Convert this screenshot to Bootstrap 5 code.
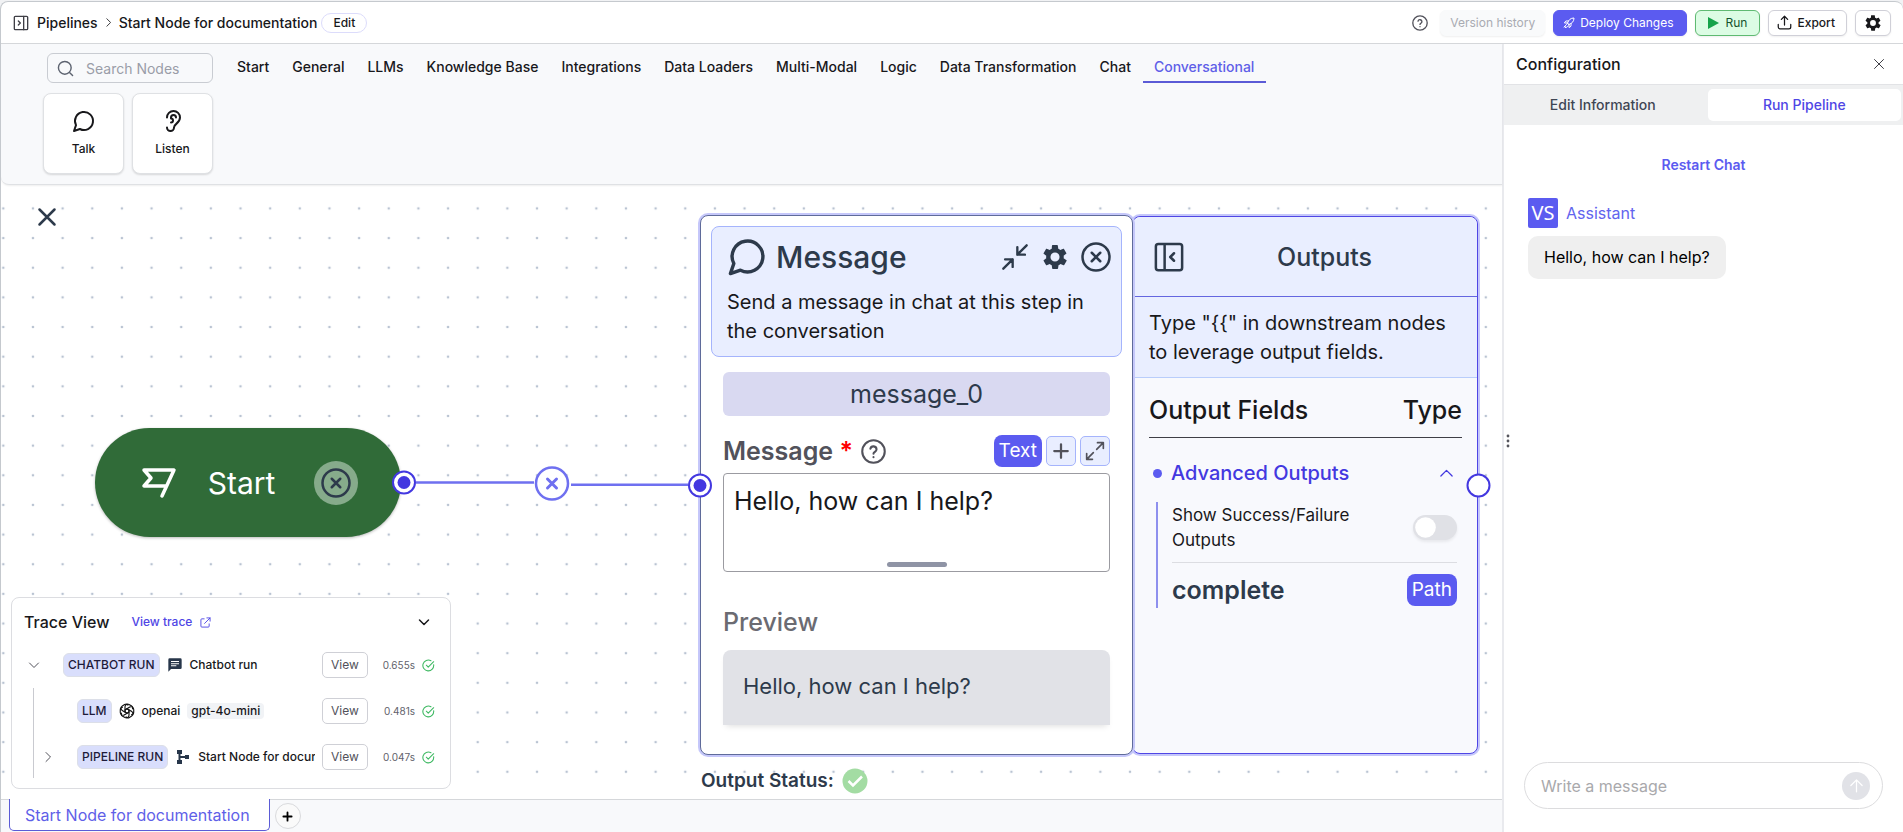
<!DOCTYPE html>
<html lang="en">
<head>
<meta charset="utf-8">
<meta name="viewport" content="width=device-width, initial-scale=1">
<title>Start Node for documentation</title>
<link href="https://cdn.jsdelivr.net/npm/bootstrap@5.3.0/dist/css/bootstrap.min.css" rel="stylesheet">
<style>
:root{--vs:#5b5bf0;--vs-deep:#4338e0;--ink:#18181b;--slate:#2d3a4b}
body{font-family:Inter,"Liberation Sans",sans-serif;font-size:14px;line-height:20px;color:var(--ink);background:#f1f2f4;min-height:100vh;padding-top:1px}
svg{display:block;flex:none}
a{text-decoration:none}
.bare{border:0;background:none;padding:0;color:inherit}
.ic{fill:none;stroke:currentColor;stroke-width:2;stroke-linecap:round;stroke-linejoin:round}
.ic-bold{stroke-width:3}
.ic-heavy{stroke-width:4}
.tone-gray{color:#52525b}
.tone-dark{color:#3f3f46}
.tone-vs{color:var(--vs)}
.tone-ok{color:#3fb963}
.app-shell{min-height:calc(100vh - 1px);background:#fff;border-top:1px solid #c5c9ce;border-left:1px solid #c5c9ce;border-radius:8px 8px 0 0;overflow:hidden}
.btn{--bs-btn-font-size:12px;--bs-btn-line-height:16px;--bs-btn-border-radius:6px}
main{min-width:0}
/* header */
.topbar{height:42px;border-bottom:1px solid #d5d7da;padding:0 12px}
.crumb-link{color:var(--ink);font-weight:500}
.btn-bar{height:26px;padding:0 11px;display:inline-flex;align-items:center;gap:5px;background:#fff;border:1px solid #d0d0d8;color:var(--ink);box-shadow:0 1px 2px #0001}
.btn-pill{height:20px;padding:0 11px;border:1px solid #dcdcfb;border-radius:10px;background:#fff;color:var(--ink);font-weight:500;line-height:16px}
.btn-ghosted{background:#f9fafb;border-color:#f9fafb;color:#a9abb2;padding:0 9px}
.btn-deploy{background:var(--vs);border-color:var(--vs);color:#fff;padding:0 12px 0 9px}
.btn-run{background:#dcfce4;border-color:#5fba72;color:#14532d;padding:0 12px 0 10px;gap:6px}
/* palette */
.palette{height:141px;background:#f8f9fb;border-bottom:1px solid #dfe1e4;box-shadow:0 1px 2px #0001;padding:9px 42px 0;border-radius:0 0 0 8px;z-index:1}
.search-wrap{width:166px;height:30px;margin:0 13px 0 4px;border:1px solid #c9ccd2;border-radius:6px;color:#5d6370;padding:0 9px;gap:12px}
.search-wrap input{border:0;background:transparent;outline:0;width:100%;min-width:0;padding:0;height:24px}
input::placeholder{color:#9a9da8;opacity:1}
.node-tabs .nav-link{padding:4px 12px 4px 11px;color:var(--ink);font-weight:500;border-bottom:2px solid transparent}
.node-tabs .nav-link.active{color:#5f5fe8;border-color:#5b5bd6}
.tile-row{margin-top:10px}
.node-tile{width:81px;height:81px;background:#fff;border:1px solid #dfe1e4;border-radius:8px;box-shadow:0 1px 2px #0002;font-size:12px;line-height:18px;font-weight:500;gap:7px;padding:0;color:var(--ink)}
/* canvas */
.flow-canvas{background:#fff;min-height:614px;overflow:hidden}
.on-canvas{position:absolute}
.flow-close{left:36px;top:22px;color:var(--slate)}
.start-node{left:94px;top:243px;width:306px;height:109px;background:#306b38;border-radius:55px;color:#fff;box-shadow:0 1px 3px #0004;font-size:30px;line-height:36px;padding:0 43px 0 46px}
.start-node span{padding-right:8px}
.start-del{background:#86ab8b;color:var(--slate);padding:7px;border-radius:50%}
.msg-node{left:699px;top:30px;width:433px;height:540px;background:#fff;border:1px solid #5f6b9a;border-radius:8px;box-shadow:0 0 0 2px #c5c7fa;padding:10px;z-index:1;color:var(--slate)}
.msg-head{height:131px;background:#e9eeff;border:1px solid #a5b4fc;border-radius:8px;padding:9px 10px 0 15px}
.msg-form{padding:15px 12px 0}
.msg-label-row{height:32px;margin:19px 0 6px}
.node-title{font-size:30px;line-height:36px;font-weight:500}
.text-20{font-size:20px;line-height:29px;color:var(--ink)}
.msg-head .text-20{margin-top:11px}
.text-25{font-size:25px;line-height:32px}
.text-17{font-size:17px;line-height:25px}
.name-input{height:44px;background:#d9d9f1;border:0;border-radius:6px;width:100%;text-align:center;color:var(--slate)}
.field-label{color:#52525b;font-weight:600}
.req{color:#f00}
.pill-type{height:32px;background:var(--vs);border:0;border-radius:8px;color:#fff;font-size:19px;line-height:24px;padding:0 5px}
.mini-btn{width:30px;height:30px;background:#e9eeff;border:1px solid #a5b4fc;border-radius:5px;padding:0;color:#52525b}
.msg-input{display:block;width:100%;height:99px;border:1px solid #9b9ba1;border-radius:4px;padding:11px 10px;color:var(--ink);resize:none;outline:0}
.grip{position:absolute;left:50%;bottom:5px;width:60px;height:5px;margin-left:-30px;border-radius:3px;background:#8f94a5}
.preview-label{color:#6b6b72;font-weight:500;margin:34px 0 12px}
.preview-box{height:75px;background:#e1e2e7;border-radius:8px 8px 0 0;padding:20px;font-size:22px;line-height:32px;box-shadow:0 4px 6px -3px #0002}
.out-node{left:1131px;top:31px;width:346px;height:538px;background:#f8f9fd;border:1px solid #4f46e5;border-radius:8px;box-shadow:0 0 0 2px #c5c7fa;color:var(--ink)}
.out-head{height:80px;background:#e9eeff;border-bottom:1px solid #6466e0;border-radius:8px 8px 0 0;padding:0 12px 0 21px;color:var(--slate)}
.out-desc{height:81px;background:#e9eeff;border-bottom:1px solid #b9cdfb;padding:12px 16px}
.out-body{padding:16px 15px 0 16px}
.out-cols{height:44px;border-bottom:1px solid #3f3f46;font-weight:500}
.adv-toggle{margin-top:21px;padding-right:8px;font-weight:500;font-size:20px;line-height:29px;color:var(--vs-deep)}
.dot-mark{width:9px;height:9px;border-radius:50%;background:var(--vs);margin:0 9px 0 4px}
.adv{margin:14px 5px 0 7px;border-left:2px solid #8e90ee;padding-left:14px;height:106px}
.adv .form-switch{height:61px;padding:0 0 9px;border-bottom:1px solid #dcdde2}
.adv-item{height:54px;font-weight:600;color:var(--slate)}
.form-switch .form-check-input{width:44px;height:25px;margin:0;border:0;background-color:#e0e1e6;--bs-form-switch-bg:url("data:image/svg+xml,%3csvg xmlns='http://www.w3.org/2000/svg' viewBox='-4 -4 8 8'%3e%3ccircle r='3.3' fill='%23fff'/%3e%3c/svg%3e");box-shadow:0 2px 3px #0001}
.edges{left:390px;top:280px;z-index:2;pointer-events:none}
.status-line{left:700px;top:583px;font-size:19px;line-height:24px;font-weight:600;color:var(--slate)}
/* trace */
.trace-card{left:10px;bottom:10px;width:440px;height:192px;background:#fff;border:1px solid #dcdde1;border-radius:8px;font-size:12px;line-height:16px;font-weight:500}
.trace-head{height:44px;padding:4px 20px 0 12px;font-size:16px}
.trace-head a{font-size:12px;color:#4f46e5;margin-left:22px}
.trace-row{height:46px;padding-right:15px;gap:7px}
.row-root{padding-left:16px}
.row-llm{padding-left:43px}
.row-pipe{padding-left:8px}
.trace-caret{margin-right:16px}
.trace-kids{margin-left:21px;border-left:1px solid #c9cad0;height:90px}
.run-badge{background:#d9defc;border:1px solid #dcdfe8;border-radius:6px;padding:3px 4px;color:#1e1b3a;white-space:nowrap}
.chip{background:#f1f3f6;border-radius:4px;padding:0 4px}
.clip-name{flex:1 1 0;min-width:0;overflow:hidden;white-space:nowrap}
.btn-view{width:46px;height:26px;background:#fff;border:1px solid #cfd0d6;border-radius:5px;color:#52525b;padding:0;flex:none}
.took{width:40px;text-align:right;font-size:10px;font-weight:400;color:#62626b;flex:none}
/* bottom tabs */
.sheet-bar{height:33px;background:#f8f9fb;border-top:1px solid #d5d7da;padding-left:8px;gap:5px}
.sheet-tab{height:32px;margin-top:-1px;border:1px solid #5b5bd6;border-top:0;border-radius:0 0 5px 5px;background:#fff;color:#5f5fe8;font-size:16px;line-height:24px;padding:0 19px 0 15px}
.sheet-add{width:26px;height:26px;border:1px solid #d9dadd;border-radius:50%;background:#fafafa;padding:0}
/* side panel */
.side-panel{width:401px;flex:none;border-left:2px solid #e9eaee;background:#fff}
.side-head{height:41px;border-bottom:1px solid #e2e3e6;padding:0 18px 0 12px;font-size:16px;font-weight:500}
.side-tabs{height:40px;background:#eff0f1;padding:4px 2px;gap:8px}
.side-tabs button{flex:1;border:0;border-radius:5px;background:none;font-weight:500;color:#3f4654}
.side-tabs button.on{background:#fff;color:#4f46e5}
.splitter{position:absolute;left:2px;top:390px}
.chat-log{padding:30px 24px}
.who{margin-top:23px;font-size:16px;color:#6264ee}
.vs-mark{width:30px;height:30px;border-radius:2px;background:var(--vs);color:#fff;font:20px/30px "Noto Sans",sans-serif}
.bubble{background:#efefef;border-radius:10px;padding:9px 16px 10px;font-size:16px;line-height:24px;color:#000}
.compose{margin:0 20px 23px;height:47px;border:1px solid #dcdcde;border-radius:24px;padding:0 12px 0 16px}
.compose input{border:0;outline:0;font-size:16px;line-height:24px;background:none;min-width:0;padding:0}
.compose input::placeholder{color:#a9a9ac}
.send{width:28px;height:28px;border:0;border-radius:50%;background:#e1e2e7;color:#fff;padding:0}
</style>
</head>
<body>
<svg width="0" height="0" class="position-absolute" aria-hidden="true">
  <defs>
    <symbol id="i-x" viewBox="0 0 24 24"><path d="M3 3l18 18M21 3L3 21"/></symbol>
    <symbol id="i-xc" viewBox="0 0 24 24"><circle cx="12" cy="12" r="10.8"/><path d="M8.6 8.6l6.8 6.8M15.4 8.6l-6.8 6.8"/></symbol>
    <symbol id="i-chat" viewBox="0 0 24 24"><path d="M7.9 20A9 9 0 1 0 4 16.1L2 22Z"/></symbol>
    <symbol id="i-gear" viewBox="0 0 24 24"><path fill="currentColor" fill-rule="evenodd" stroke="none" d="M19.4 13c.1-.3.1-.7.1-1s0-.7-.1-1l2.200-1.700c.2-.1.300-.4.200-.6l-2.100-3.600c-.1-.2-.4-.3-.6-.2l-2.600 1c-.5-.4-1.100-.7-1.700-1l-.4-2.800c0-.2-.2-.4-.5-.4h-4c-.2 0-.4.2-.5.4L9.200 4.900c-.6.3-1.200.6-1.700 1l-2.600-1c-.2-.1-.5 0-.6.200L2.200 8.700c-.1.200-.1.500.1.600L4.500 11c0 .3-.1.700-.1 1s0 .7.100 1l-2.200 1.700c-.2.1-.2.4-.1.600l2.100 3.600c.1.200.4.300.6.200l2.600-1c.5.4 1.100.7 1.700 1l.4 2.800c0 .2.200.4.500.4h4c.2 0 .4-.2.500-.4l.4-2.800c.6-.3 1.200-.6 1.700-1l2.600 1c.2.100.5 0 .6-.2l2.100-3.600c.1-.2.100-.5-.1-.6zM12 15.900a3.900 3.900 0 1 1 0-7.800 3.900 3.900 0 0 1 0 7.800z"/></symbol>
    <symbol id="i-help" viewBox="0 0 24 24"><circle cx="12" cy="12" r="10.8"/><path d="M9 9.300a3 3 0 0 1 5.900.8c0 2-2.900 2.400-2.900 4M12 17.400v.1"/></symbol>
    <symbol id="i-down" viewBox="0 0 24 24"><path d="M3 8l9 9 9-9"/></symbol>
    <symbol id="i-right" viewBox="0 0 24 24"><path d="M8 3l9 9-9 9"/></symbol>
    <symbol id="i-ok" viewBox="0 0 24 24"><path d="M21.500 10.500A10 10 0 1 1 16.500 3.200"/><path d="M8 11.500l3.500 3.500L21.500 5"/></symbol>
    <symbol id="i-plus" viewBox="0 0 24 24"><path d="M12 3v18M3 12h18"/></symbol>
    <pattern id="dots" width="29.65" height="29.65" patternUnits="userSpaceOnUse" x="-12.5" y="8.6"><circle cx="14.8" cy="14.8" r="1.3" fill="#b9c3d2"/></pattern>
  </defs>
</svg>
<div class="app-shell d-flex flex-column">
  <header class="topbar d-flex align-items-center">
    <button class="bare tone-dark" aria-label="Toggle sidebar"><svg class="ic" width="16" height="16" viewBox="0 0 24 24"><rect x="2" y="2" width="20" height="20" rx="1.5"/><path d="M16 2v20M8 9l3 3-3 3"/></svg></button>
    <nav class="d-flex align-items-center gap-2 ms-2" aria-label="Breadcrumb">
      <a href="#" class="crumb-link">Pipelines</a>
      <svg class="ic" width="5" height="9" viewBox="6 2 12 20"><use href="#i-right" width="24" height="24"/></svg>
      <a href="#" class="crumb-link">Start Node for documentation</a>
    </nav>
    <button class="btn btn-pill ms-1">Edit</button>
    <div class="d-flex align-items-center gap-2 ms-auto">
      <button class="bare tone-gray me-1" aria-label="Help"><svg class="ic" width="16" height="16"><use href="#i-help"/></svg></button>
      <button class="btn btn-bar btn-ghosted">Version history</button>
      <button class="btn btn-bar btn-deploy"><svg class="ic" width="12" height="12" viewBox="0 0 24 24"><path d="M9 12C11 6 15 2 22 2c0 7-4 11-10 13zM9 12l3 3M9 12H3c1-4 4-5 8-4M12 15v6c4-1 5-4 4-8M7 15c-2 1-3 3-3 6 3 0 5-1 6-3M2 20l3-3"/></svg>Deploy Changes</button>
      <button class="btn btn-bar btn-run"><svg width="14" height="14" viewBox="0 0 14 14"><path d="M2 1l11 6-11 6z" fill="#16a34a"/></svg>Run</button>
      <button class="btn btn-bar ps-2 fw-medium"><svg class="ic" width="15" height="15" viewBox="0 0 24 24"><path d="M2 15v4a3 3 0 0 0 3 3h14a3 3 0 0 0 3-3v-4M12 16V2M7 7l5-5 5 5"/></svg>Export</button>
      <button class="btn btn-bar px-2" aria-label="Settings"><svg width="18" height="18"><use href="#i-gear"/></svg></button>
    </div>
  </header>

  <div class="d-flex flex-grow-1">
    <main class="d-flex flex-column flex-grow-1">
      <section class="palette position-relative">
        <div class="d-flex">
          <div class="search-wrap d-flex align-items-center">
            <svg class="ic" width="17" height="17" viewBox="0 0 24 24"><circle cx="11" cy="11" r="9"/><path d="M18 18l4 4"/></svg>
            <input placeholder="Search Nodes" aria-label="Search Nodes">
          </div>
          <ul class="nav node-tabs flex-nowrap">
            <li><a class="nav-link" href="#">Start</a></li>
            <li><a class="nav-link" href="#">General</a></li>
            <li><a class="nav-link" href="#">LLMs</a></li>
            <li><a class="nav-link" href="#">Knowledge Base</a></li>
            <li><a class="nav-link" href="#">Integrations</a></li>
            <li><a class="nav-link" href="#">Data Loaders</a></li>
            <li><a class="nav-link" href="#">Multi-Modal</a></li>
            <li><a class="nav-link" href="#">Logic</a></li>
            <li><a class="nav-link" href="#">Data Transformation</a></li>
            <li><a class="nav-link" href="#">Chat</a></li>
            <li><a class="nav-link active" href="#">Conversational</a></li>
          </ul>
        </div>
        <div class="tile-row d-flex gap-2">
          <button class="node-tile d-flex flex-column align-items-center justify-content-center"><svg class="ic" width="24" height="24"><use href="#i-chat"/></svg>Talk</button>
          <button class="node-tile d-flex flex-column align-items-center justify-content-center"><svg class="ic" width="24" height="24" viewBox="0 0 24 24"><path d="M6 8.500a6.500 6.500 0 1 1 13 0c0 6-6 6-6 10a3.500 3.500 0 1 1-7 0"/><path d="M15 8.500a2.500 2.500 0 0 0-5 0v1a2 2 0 1 1 0 4"/></svg>Listen</button>
        </div>
      </section>

      <section class="flow-canvas position-relative flex-grow-1">
        <svg class="on-canvas w-100 h-100" aria-hidden="true"><rect width="100%" height="100%" fill="url(#dots)"/></svg>
        <button class="flow-close bare on-canvas" aria-label="Close"><svg class="ic ic-bold" width="20" height="20"><use href="#i-x"/></svg></button>

        <div class="start-node on-canvas d-flex align-items-center justify-content-between">
          <svg width="36" height="32" viewBox="0 0 36 32" fill="none" stroke="#fff" stroke-width="3.5" stroke-linejoin="round" stroke-linecap="round"><path d="M21 29L33 3H3l7 8-7 8h22"/></svg>
          <span>Start</span>
          <button class="bare start-del" aria-label="Delete start node"><svg class="ic" width="30" height="30"><use href="#i-xc"/></svg></button>
        </div>

        <article class="out-node on-canvas">
          <div class="out-head d-flex align-items-center">
            <button class="bare" aria-label="Collapse outputs"><svg class="ic" width="30" height="30" viewBox="0 0 24 24"><rect x="1.5" y="1.5" width="21" height="21" rx="2"/><path d="M8.500 2v20M16 9l-3 3 3 3"/></svg></button>
            <span class="text-25 fw-medium flex-grow-1 text-center">Outputs</span>
          </div>
          <div class="out-desc text-20">Type "{{" in downstream nodes to leverage output fields.</div>
          <div class="out-body">
            <div class="out-cols text-25 d-flex justify-content-between"><span>Output Fields</span><span>Type</span></div>
            <button class="bare adv-toggle d-flex align-items-center w-100"><span class="dot-mark"></span>Advanced Outputs<svg class="ic ms-auto" width="15" height="15" viewBox="0 0 24 24"><path d="M3 16l9-9 9 9"/></svg></button>
            <div class="adv">
              <div class="form-check form-switch d-flex align-items-center justify-content-between m-0">
                <label class="text-17" for="sf">Show Success/Failure<br>Outputs</label>
                <input class="form-check-input" type="checkbox" role="switch" id="sf">
              </div>
              <div class="adv-item d-flex justify-content-between align-items-center">
                <span class="text-25">complete</span><button class="pill-type">Path</button>
              </div>
            </div>
          </div>
        </article>

        <article class="msg-node on-canvas">
          <div class="msg-head">
            <div class="d-flex align-items-center gap-2">
              <svg class="ic" width="41" height="41" viewBox="0 0 24 24"><use href="#i-chat"/></svg>
              <span class="node-title me-auto">Message</span>
              <button class="bare me-1" aria-label="Collapse"><svg class="ic" width="28" height="28" viewBox="0 0 24 24"><path d="M22 2l-8 8M14 3.500V10h6.500M2 22l8-8M10 20.500V14H3.500"/></svg></button>
              <button class="bare me-1" aria-label="Node settings"><svg width="28" height="28"><use href="#i-gear"/></svg></button>
              <button class="bare" aria-label="Delete node"><svg class="ic" width="30" height="30"><use href="#i-xc"/></svg></button>
            </div>
            <div class="text-20">Send a message in chat at this step in the conversation</div>
          </div>
          <div class="msg-form">
            <input class="name-input text-25" value="message_0" aria-label="Node name">
            <div class="msg-label-row d-flex align-items-center">
              <label class="field-label text-25" for="mg">Message <span class="req">*</span></label>
              <svg class="ic tone-gray ms-2 me-auto" width="25" height="25"><use href="#i-help"/></svg>
              <button class="pill-type">Text</button>
              <button class="mini-btn ms-1 d-flex align-items-center justify-content-center" aria-label="Add"><svg class="ic ic-bold" width="18" height="18"><use href="#i-plus"/></svg></button>
              <button class="mini-btn ms-1 d-flex align-items-center justify-content-center" aria-label="Expand"><svg class="ic" width="20" height="20" viewBox="0 0 24 24"><path d="M14 10l8-8M15 2h7v7M10 14l-8 8M9 22H2v-7"/></svg></button>
            </div>
            <div class="position-relative"><textarea id="mg" class="msg-input text-25">Hello, how can I help?</textarea><span class="grip"></span></div>
            <div class="preview-label text-25">Preview</div>
            <div class="preview-box">Hello, how can I help?</div>
          </div>
        </article>

        <svg class="edges on-canvas" width="1100" height="44" viewBox="391 465 1100 44" aria-hidden="true">
          <g fill="none" stroke="#6f70f0" stroke-width="2.5"><path d="M416 482.500H534M571 484.700H688"/><circle cx="552" cy="483.5" r="16" fill="#fff"/><path d="M547.500 479l9 9M556.500 479l-9 9" stroke-width="3" stroke-linecap="round"/></g>
          <g fill="#fff" stroke="#4338e0" stroke-width="2"><circle cx="404" cy="482.5" r="11"/><circle cx="700" cy="485.5" r="11"/><circle cx="1478.5" cy="485.5" r="11"/></g>
          <g fill="#4338e0"><circle cx="404" cy="482.5" r="6.5"/><circle cx="700" cy="485.5" r="6.5"/></g>
        </svg>

        <div class="status-line on-canvas d-flex align-items-center gap-2">Output Status: <svg width="26" height="26" viewBox="0 0 26 26"><circle cx="13" cy="13" r="12.5" fill="#a3dca3"/><path d="M6.500 13l4.500 4.500 9-9" fill="none" stroke="#fff" stroke-width="2.5"/></svg></div>

        <section class="trace-card on-canvas">
          <div class="trace-head d-flex align-items-center">
            <span>Trace View</span>
            <a href="#" class="d-flex align-items-center gap-2">View trace <svg class="ic" width="11" height="11" viewBox="0 0 24 24"><path d="M15 2h7v7M22 2L10 14M9 4H4a2 2 0 0 0-2 2v14a2 2 0 0 0 2 2h14a2 2 0 0 0 2-2v-5"/></svg></a>
            <button class="bare ms-auto" aria-label="Collapse trace"><svg class="ic ic-bold" width="12" height="12"><use href="#i-down"/></svg></button>
          </div>
          <div class="trace-row row-root d-flex align-items-center">
            <svg class="ic tone-gray trace-caret" width="12" height="12"><use href="#i-down"/></svg>
            <span class="run-badge">CHATBOT RUN</span>
            <svg width="16" height="16" viewBox="0 0 24 24"><path fill="#27364a" fill-rule="evenodd" d="M20 2H4a2 2 0 0 0-2 2v18l4-4h14a2 2 0 0 0 2-2V4a2 2 0 0 0-2-2zM6 6h12v1.500H6zm0 3.200h12v1.500H6zm0 3.300h8V14H6z"/></svg>
            <span class="me-auto">Chatbot run</span>
            <button class="btn-view">View</button><span class="took">0.655s</span><svg class="ic tone-ok" width="13" height="13"><use href="#i-ok"/></svg>
          </div>
          <div class="trace-kids">
            <div class="trace-row row-llm d-flex align-items-center">
              <span class="run-badge">LLM</span>
              <svg width="16" height="16" viewBox="0 0 24 24" fill="none" stroke="#111" stroke-width="1.7"><g id="petal"><path d="M9 6.800V5.500a4 4 0 0 1 6-3.400l3.500 2a4 4 0 0 1 1.500 5.400M9 5.500v8L12 15.400"/></g><use href="#petal" transform="rotate(60 12 12)"/><use href="#petal" transform="rotate(120 12 12)"/><use href="#petal" transform="rotate(180 12 12)"/><use href="#petal" transform="rotate(240 12 12)"/><use href="#petal" transform="rotate(300 12 12)"/></svg>
              <span>openai</span><span class="chip me-auto">gpt-4o-mini</span>
              <button class="btn-view">View</button><span class="took">0.481s</span><svg class="ic tone-ok" width="13" height="13"><use href="#i-ok"/></svg>
            </div>
            <div class="trace-row row-pipe d-flex align-items-center">
              <svg class="ic tone-gray trace-caret" width="12" height="12"><use href="#i-right"/></svg>
              <span class="run-badge">PIPELINE RUN</span>
              <svg width="16" height="16" viewBox="0 0 16 16"><path fill="#27364a" d="M2 1h5v4H5.500v2H10V6h4v4h-4V9H5.500v2H7v4H2v-4h1.500V5H2z"/></svg>
              <span class="clip-name">Start Node for documentation</span>
              <button class="btn-view">View</button><span class="took">0.047s</span><svg class="ic tone-ok" width="13" height="13"><use href="#i-ok"/></svg>
            </div>
          </div>
        </section>
      </section>

      <footer class="sheet-bar d-flex align-items-center">
        <button class="sheet-tab align-self-start">Start Node for documentation</button>
        <button class="sheet-add d-flex align-items-center justify-content-center" aria-label="Add pipeline"><svg class="ic ic-heavy" width="11" height="11"><use href="#i-plus"/></svg></button>
      </footer>
    </main>

    <aside class="side-panel d-flex flex-column position-relative">
      <div class="side-head d-flex align-items-center justify-content-between"><span>Configuration</span><button class="bare tone-dark" aria-label="Close panel"><svg class="ic" width="12" height="12"><use href="#i-x"/></svg></button></div>
      <div class="side-tabs d-flex"><button>Edit Information</button><button class="on">Run Pipeline</button></div>
      <svg class="splitter" width="4" height="14" viewBox="0 0 4 14" fill="#55555c"><circle cx="2" cy="2" r="1.4"/><circle cx="2" cy="7" r="1.4"/><circle cx="2" cy="12" r="1.4"/></svg>
      <div class="chat-log flex-grow-1">
        <div class="text-center"><button class="bare tone-vs fw-semibold">Restart Chat</button></div>
        <div class="who d-flex align-items-center gap-2"><span class="vs-mark text-center">VS</span><span>Assistant</span></div>
        <div class="d-flex mt-2"><div class="bubble">Hello, how can I help?</div></div>
      </div>
      <form class="compose d-flex align-items-center">
        <input class="flex-grow-1" placeholder="Write a message" aria-label="Write a message">
        <button type="button" class="send d-flex align-items-center justify-content-center" aria-label="Send"><svg class="ic" width="15" height="15" viewBox="0 0 24 24"><path d="M12 22V3M3 12l9-9 9 9"/></svg></button>
      </form>
    </aside>
  </div>
</div>
<script src="https://cdn.jsdelivr.net/npm/bootstrap@5.3.0/dist/js/bootstrap.bundle.min.js"></script>
</body>
</html>
